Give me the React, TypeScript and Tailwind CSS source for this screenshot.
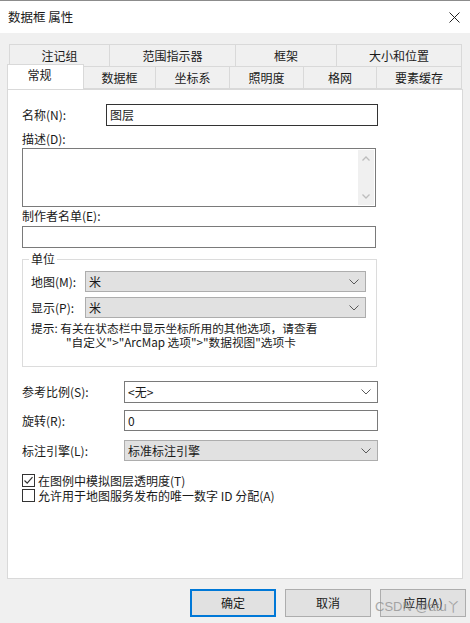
import React from 'react'

const font = '"Microsoft YaHei UI", "Noto Sans CJK SC", "Noto Sans", sans-serif'

function Chevron() {
  return (
    <svg width="10" height="6" viewBox="0 0 10 6" className="shrink-0">
      <path d="M0.5 0.5 L5 5 L9.5 0.5" fill="none" stroke="#5a5a5a" strokeWidth="1" />
    </svg>
  )
}

function Select({ value, width, gray }: { value: string; width: number; gray?: boolean }) {
  return (
    <div
      className={
        gray
          ? 'flex h-[21px] items-center justify-between border border-[#adadad] bg-[#e1e1e1] pl-[3px] pr-[6px]'
          : 'flex h-[22px] items-center justify-between border border-[#7a7a7a] bg-white pl-[3px] pr-[6px]'
      }
      style={{ width }}
    >
      <span>{value}</span>
      <Chevron />
    </div>
  )
}

function Tab({ label, width, active }: { label: string; width: number; active?: boolean }) {
  return (
    <div
      className={
        active
          ? 'relative z-10 -mb-px -mt-[2px] flex h-[25px] items-start justify-center border border-b-0 border-[#d9d9d9] bg-white pt-[1px] pr-[12px]'
          : 'flex h-[23px] items-center justify-center border border-l-0 border-[#d9d9d9] bg-[#f0f0f0]'
      }
      style={{ width }}
    >
      {label}
    </div>
  )
}

function Check({ checked }: { checked?: boolean }) {
  return (
    <div className="flex h-[13px] w-[13px] shrink-0 items-center justify-center border border-[#333] bg-white">
      {checked && (
        <svg width="11" height="11" viewBox="0 0 11 11">
          <path d="M1.5 5.5 L4.2 8.2 L9.5 2.2" fill="none" stroke="#333" strokeWidth="1.2" />
        </svg>
      )}
    </div>
  )
}

export default function App() {
  return (
    <div
      className="flex h-[623px] w-[470px] flex-col overflow-hidden border-t border-[#8c8c8c] bg-[#f0f0f0] text-[12px] text-[#1a1a1a]"
      style={{ fontFamily: font }}
    >
      {/* title bar */}
      <div className="flex h-[32px] shrink-0 items-center justify-between bg-white pl-[8px] pr-[10px]">
        <span className="text-[12.5px]">数据框 属性</span>
        <svg width="11" height="11" viewBox="0 0 11 11">
          <path d="M0.5 0.5 L10.5 10.5 M10.5 0.5 L0.5 10.5" stroke="#222" strokeWidth="1" />
        </svg>
      </div>

      {/* tabs */}
      <div className="mt-[11px] flex pl-[9px]">
        <div className="flex h-[23px] w-[101px] items-center justify-center border border-[#d9d9d9]">注记组</div>
        <div className="flex h-[23px] w-[126px] items-center justify-center border border-l-0 border-[#d9d9d9]">范围指示器</div>
        <div className="flex h-[23px] w-[101px] items-center justify-center border border-l-0 border-[#d9d9d9]">框架</div>
        <div className="flex h-[23px] w-[125px] items-center justify-center border border-l-0 border-[#d9d9d9]">大小和位置</div>
      </div>
      <div className="-mt-px flex pl-[7px]">
        <Tab label="常规" width={77} active />
        <Tab label="数据框" width={72} />
        <Tab label="坐标系" width={74} />
        <Tab label="照明度" width={74} />
        <Tab label="格网" width={73} />
        <Tab label="要素缓存" width={85} />
      </div>

      {/* panel */}
      <div className="ml-[7px] flex h-[490px] w-[456px] flex-col border border-[#d9d9d9] bg-white pl-[14px]">
        <div className="mt-[14px] flex h-[22px] items-center">
          <span className="w-[84px]">名称(N):</span>
          <div className="flex h-[22px] w-[272px] items-center border border-[#333] pl-[3px]">图层</div>
        </div>

        <div className="mt-[4px] h-[18px] leading-[18px]">描述(D):</div>
        <div className="flex h-[59px] w-[354px] justify-end border border-[#7a7a7a] p-px">
          <div className="flex w-[16px] flex-col items-center justify-between bg-[#f0f0f0] py-[6px]">
            <svg width="8" height="5" viewBox="0 0 8 5">
              <path d="M0.5 4.5 L4 1 L7.5 4.5" fill="none" stroke="#bdbdbd" strokeWidth="1.3" />
            </svg>
            <svg width="8" height="5" viewBox="0 0 8 5">
              <path d="M0.5 0.5 L4 4 L7.5 0.5" fill="none" stroke="#bdbdbd" strokeWidth="1.3" />
            </svg>
          </div>
        </div>

        <div className="h-[18px] leading-[18px]">制作者名单(E):</div>
        <div className="mt-px h-[22px] w-[354px] border border-[#7a7a7a]" />

        {/* 单位 group */}
        <div className="relative mt-[11px] flex h-[108px] w-[355px] flex-col border border-[#dcdcdc] pl-[8px]">
          <span className="absolute -top-[9px] left-[6px] bg-white px-[2px] leading-[16px]">单位</span>
          <div className="mt-[11px] flex items-center">
            <span className="w-[54px]">地图(M):</span>
            <Select value="米" width={281} gray />
          </div>
          <div className="mt-[5px] flex items-center">
            <span className="w-[54px]">显示(P):</span>
            <Select value="米" width={281} gray />
          </div>
          <div className="mt-[3px] text-[11.7px] leading-[14px]">
            <div className="h-[14px]">提示: 有关在状态栏中显示坐标所用的其他选项，请查看</div>
            <div className="h-[14px] pl-[35px]">"自定义"&gt;"ArcMap 选项"&gt;"数据视图"选项卡</div>
          </div>
        </div>

        <div className="mt-[14px] flex items-center">
          <span className="w-[102px]">参考比例(S):</span>
          <Select value="<无>" width={254} />
        </div>
        <div className="mt-[7px] flex items-center">
          <span className="w-[102px]">旋转(R):</span>
          <div className="flex h-[21px] w-[254px] items-center border border-[#7a7a7a] pl-[3px]">0</div>
        </div>
        <div className="mt-[9px] flex items-center">
          <span className="w-[102px]">标注引擎(L):</span>
          <Select value="标准标注引擎" width={254} gray />
        </div>

        <div className="mt-[12px] flex h-[15px] items-center gap-[3px] leading-[15px]">
          <Check checked />
          <span>在图例中模拟图层透明度(T)</span>
        </div>
        <div className="flex h-[15px] items-center gap-[3px] leading-[15px]">
          <Check />
          <span>允许用于地图服务发布的唯一数字 ID 分配(A)</span>
        </div>
      </div>

      {/* buttons */}
      <div className="relative mt-[10px] flex gap-[9px] pl-[190px]">
        <div className="flex h-[28px] w-[86px] items-center justify-center border-2 border-[#0078d7] bg-[#e1e1e1]">确定</div>
        <div className="flex h-[28px] w-[86px] items-center justify-center border border-[#adadad] bg-[#e1e1e1]">取消</div>
        <div className="flex h-[28px] w-[86px] items-center justify-center border border-[#adadad] bg-[#e1e1e1]">应用(A)</div>
        <span className="absolute left-[375px] top-[8px] text-[13px] text-[#8a8a8a] opacity-70" style={{ fontFamily: '"Liberation Sans", "Noto Sans CJK SC", sans-serif' }}>
          CSDN @atu丫
        </span>
      </div>
    </div>
  )
}
